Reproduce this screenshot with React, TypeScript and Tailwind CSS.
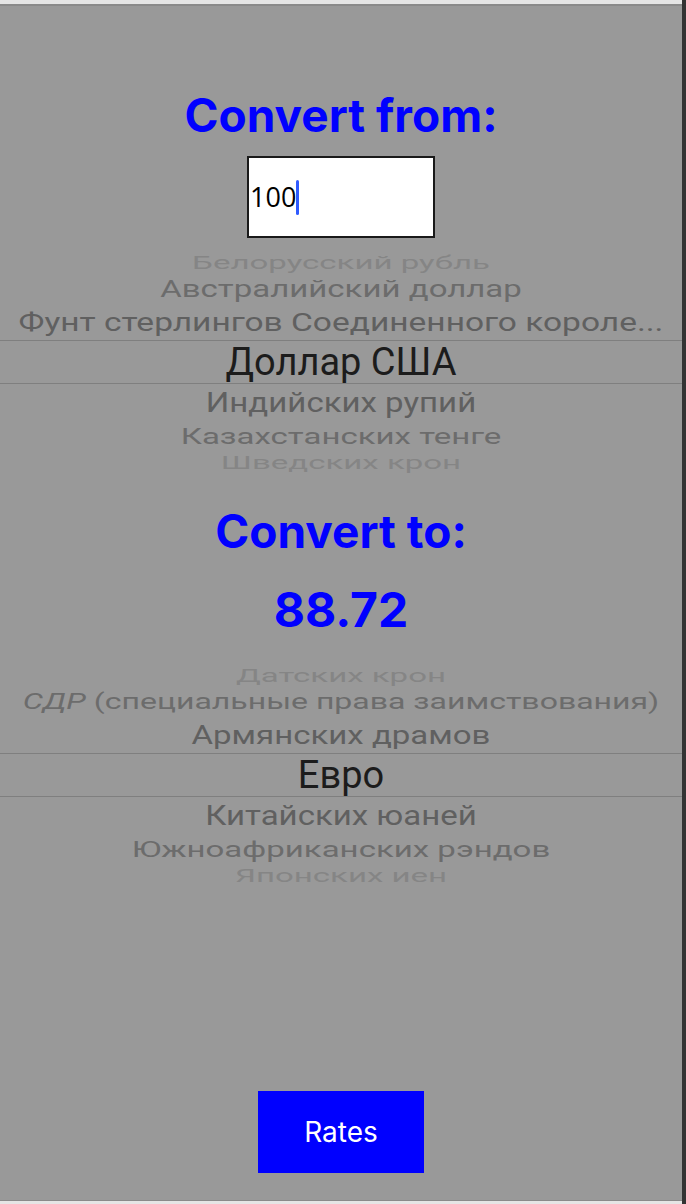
import React from "react";

type Row = { text: React.ReactNode; h: string; scale: string; color: string; size: string };

const fromRows: Row[] = [
  { text: "Белорусский рубль", h: "h-[20px]", scale: "scale-y-55", color: "text-[#858585]", size: "text-[33px]" },
  { text: "Австралийский доллар", h: "h-[32px]", scale: "scale-y-70", color: "text-[#6c6c6c]", size: "text-[33px]" },
  { text: "Фунт стерлингов Соединенного короле...", h: "h-[36px]", scale: "scale-y-78", color: "text-[#606060]", size: "text-[33.5px]" },
  { text: "Доллар США", h: "h-[44px]", scale: "scale-y-100", color: "text-[#1c1c1c]", size: "text-[38px]" },
  { text: "Индийских рупий", h: "h-[36px]", scale: "scale-y-85", color: "text-[#606060]", size: "text-[33px]" },
  { text: "Казахстанских тенге", h: "h-[32px]", scale: "scale-y-68", color: "text-[#6c6c6c]", size: "text-[33px]" },
  { text: "Шведских крон", h: "h-[20px]", scale: "scale-y-55", color: "text-[#858585]", size: "text-[33px]" },
];

const toRows: Row[] = [
  { text: "Датских крон", h: "h-[20px]", scale: "scale-y-55", color: "text-[#858585]", size: "text-[33px]" },
  {
    text: (
      <>
        <span className="italic">СДР</span> (специальные права заимствования)
      </>
    ),
    h: "h-[32px]",
    scale: "scale-y-70",
    color: "text-[#6c6c6c]",
    size: "text-[32px]",
  },
  { text: "Армянских драмов", h: "h-[36px]", scale: "scale-y-78", color: "text-[#606060]", size: "text-[33px]" },
  { text: "Евро", h: "h-[44px]", scale: "scale-y-100", color: "text-[#1c1c1c]", size: "text-[38px]" },
  { text: "Китайских юаней", h: "h-[36px]", scale: "scale-y-85", color: "text-[#606060]", size: "text-[33px]" },
  { text: "Южноафриканских рэндов", h: "h-[32px]", scale: "scale-y-68", color: "text-[#6c6c6c]", size: "text-[33px]" },
  { text: "Японских иен", h: "h-[20px]", scale: "scale-y-55", color: "text-[#858585]", size: "text-[33px]" },
];

function Wheel({ rows }: { rows: Row[] }) {
  return (
    <div className="flex flex-col w-full font-['Roboto',sans-serif]">
      {rows.map((r, i) => (
        <div
          key={i}
          className={`${r.h} flex items-center justify-center ${
            i === 3 ? "border-y border-[#7f7f7f]" : ""
          }`}
        >
          <span className={`${r.scale} ${r.color} ${r.size} whitespace-nowrap leading-none`}>{r.text}</span>
        </div>
      ))}
    </div>
  );
}

export default function App() {
  return (
    <div className="flex w-[686px] h-[1204px] overflow-hidden">
      <div className="flex flex-col flex-1">
        {/* window chrome */}
        <div className="h-[6px] bg-[#e5e5e5] border-b-2 border-[#8a8a8a]" />

        <div className="flex flex-col items-center flex-1 bg-[#999999] pt-[83px] pb-[27px]">
          <h1 className="text-[46px] leading-[52px] font-bold text-[#0000ff] font-['Inter',sans-serif]">
            Convert from:
          </h1>

          <div className="mt-[15px] w-[188px] h-[82px] bg-white border-2 border-[#1a1a1a] flex items-center pl-[1px]">
            <span className="text-[27px] text-black font-['Open_Sans',sans-serif]">100</span>
            <span className="w-[3px] h-[35px] bg-[#2f5bff] rounded-full" />
          </div>

          <div className="mt-[14px] w-full">
            <Wheel rows={fromRows} />
          </div>

          <h2 className="mt-[33px] text-[46px] leading-[52px] font-bold text-[#0000ff] font-['Inter',sans-serif]">
            Convert to:
          </h2>

          <div className="mt-[25px] text-[48px] leading-[56px] font-bold text-[#0000ff] font-['Inter',sans-serif]">
            88.72
          </div>

          <div className="mt-[27px] w-full">
            <Wheel rows={toRows} />
          </div>

          <div className="flex-1" />

          <button className="w-[166px] h-[82px] bg-[#0000ff] text-white text-[28px] font-['Inter',sans-serif]">
            Rates
          </button>
        </div>

        <div className="h-[4px] bg-[#e5e5e5] border-t border-[#8a8a8a]" />
      </div>
      <div className="w-[4px] bg-[#333333]" />
    </div>
  );
}
